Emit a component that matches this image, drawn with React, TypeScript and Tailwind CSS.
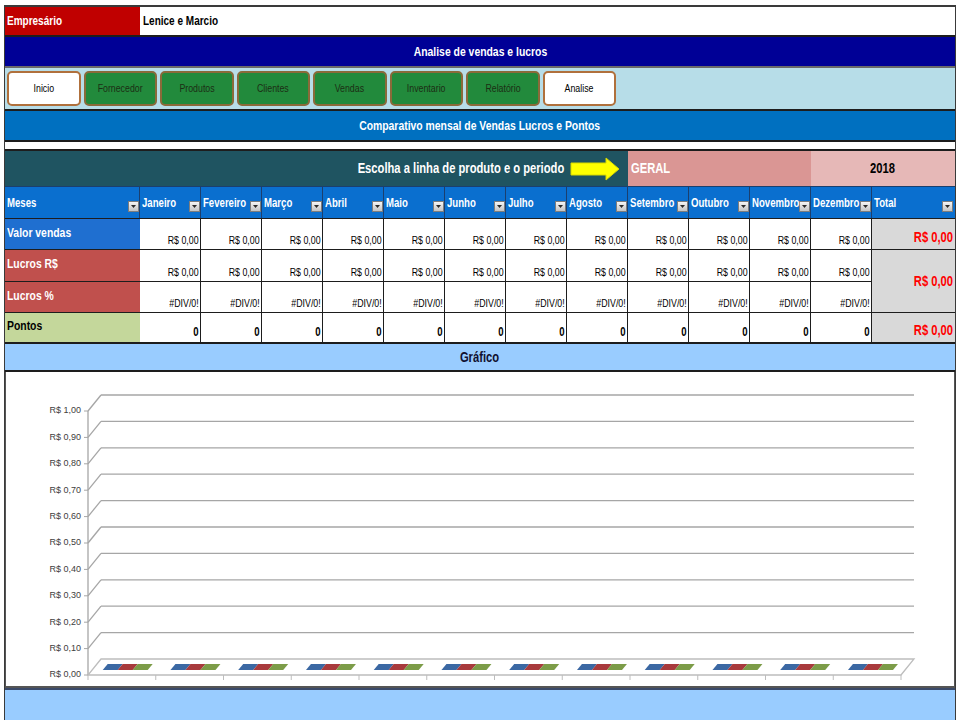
import React from 'react';

const months = ['Janeiro', 'Fevereiro', 'Março', 'Abril', 'Maio', 'Junho', 'Julho', 'Agosto', 'Setembro', 'Outubro', 'Novembro', 'Dezembro'];

const buttons = [
  { label: 'Inicio', active: true },
  { label: 'Fornecedor', active: false },
  { label: 'Produtos', active: false },
  { label: 'Clientes', active: false },
  { label: 'Vendas', active: false },
  { label: 'Inventario', active: false },
  { label: 'Relatório', active: false },
  { label: 'Analise', active: true },
];

const axisLabels = ['R$ 1,00', 'R$ 0,90', 'R$ 0,80', 'R$ 0,70', 'R$ 0,60', 'R$ 0,50', 'R$ 0,40', 'R$ 0,30', 'R$ 0,20', 'R$ 0,10', 'R$ 0,00'];

// no narrow font installed, so squeeze Arial metrics horizontally
const N = ({ children, origin = 'left' }: { children: React.ReactNode; origin?: 'left' | 'right' | 'center' }) => (
  <span
    className={`inline-block whitespace-nowrap scale-x-[0.8] ${
      origin === 'left' ? 'origin-left' : origin === 'right' ? 'origin-right' : 'origin-center'
    }`}
  >
    {children}
  </span>
);

const Drop = () => (
  <span className="flex h-[11px] w-[11px] shrink-0 items-center justify-center border border-[#7d7d7d] bg-linear-to-b from-[#f6f6f6] to-[#c4c4c4]">
    <svg width="5" height="3" viewBox="0 0 5 3">
      <path d="M0 0h5L2.5 3z" fill="#2a2a2a" />
    </svg>
  </span>
);

const Chart = () => {
  const barColors = ['#3b68a3', '#a83a3c', '#7c9c48'];
  return (
    <svg width="947" height="315" viewBox="0 0 947 315">
      {axisLabels.map((label, k) => {
        const y = 23 + k * 26.4;
        return (
          <g key={label}>
            {k < 10 && <line x1="94" y1={y} x2="907" y2={y} stroke="#a6a6a6" strokeWidth="1.3" />}
            {k < 10 && <line x1="81" y1={y + 16} x2="94" y2={y} stroke="#a6a6a6" strokeWidth="1.3" />}
            <line x1="77" y1={y + 16} x2="81" y2={y + 16} stroke="#a6a6a6" />
            <text x="74" y={y + 16} textAnchor="end" dominantBaseline="middle" fontSize="9" fill="#404040">
              {label}
            </text>
          </g>
        );
      })}
      <line x1="81" y1="39" x2="81" y2="303" stroke="#a6a6a6" strokeWidth="1.3" />
      <polygon points="94,287 907,287 894,303 81,303" fill="none" stroke="#bdbdbd" strokeWidth="1.3" />
      {Array.from({ length: 13 }).map((_, i) => (
        <line key={i} x1={81 + i * 67.75} y1="303" x2={81 + i * 67.75} y2="308" stroke="#bdbdbd" />
      ))}
      {Array.from({ length: 12 }).map((_, i) => {
        const x0 = 95.7 + i * 67.75;
        return (
          <g key={i}>
            {barColors.map((c, j) => {
              const bl = x0 + j * 15;
              return <polygon key={c} points={`${bl},298 ${bl + 15},298 ${bl + 20},292 ${bl + 5},292`} fill={c} />;
            })}
          </g>
        );
      })}
    </svg>
  );
};

export default function App() {
  return (
    <div className="h-[720px] w-[960px] overflow-hidden bg-white pl-[4px] pt-[5px] font-['Liberation_Sans',Arial,sans-serif]">
      <div className="w-[952px] border-x border-t-2 border-[#3a3a3a]">
        {/* empresario */}
        <div className="flex h-[30px] border-b-2 border-[#1d1d1d]">
          <div className="flex w-[135px] items-center bg-[#c00000] pl-[2px] text-[12.5px] font-bold text-white">
            <N>Empresário</N>
          </div>
          <div className="flex flex-1 items-center pl-[3px] text-[12.5px] font-bold text-black">
            <N>Lenice e Marcio</N>
          </div>
        </div>
        <div className="flex h-[31px] items-center justify-center border-b-2 border-[#6a6a6a] bg-[#000096] text-[13px] font-bold text-white">
          <N origin="center">Analise de vendas e lucros</N>
        </div>
        {/* menu */}
        <div className="flex h-[43px] items-center gap-[3px] border-b-2 border-[#1d1d1d] bg-[#b7dde8] pl-[2px]">
          {buttons.map((b) => (
            <div
              key={b.label}
              className={`flex h-[35px] w-[73.5px] items-center justify-center rounded-[5px] border-2 text-[11px] ${
                b.active ? 'border-[#b0703c] bg-white text-black' : 'border-[#8a6a3a] bg-[#228a3c] text-[#1c2e14]'
              }`}
            >
              <N origin="center">{b.label}</N>
            </div>
          ))}
        </div>
        <div className="flex h-[31px] items-center justify-center border-b-2 border-[#1d1d1d] bg-[#0070c0] text-[13px] font-bold text-white">
          <N origin="center">Comparativo mensal de Vendas Lucros e Pontos</N>
        </div>
        <div className="h-[9px] border-b-2 border-[#1d1d1d] bg-white" />

        {/* tabela */}
        <div className="grid grid-cols-[135px_repeat(12,61px)_83px]">
          <div className="col-span-9 flex h-[35px] items-center justify-end gap-[6px] bg-[#1f5461] pr-[8px]">
            <span className="text-[14px] font-bold text-white">
              <N origin="right">Escolha a linha de produto e o periodo</N>
            </span>
            <svg width="50" height="24" viewBox="0 0 50 24">
              <path d="M1 6h35V1l13 11-13 11v-5H1z" fill="#ffff00" stroke="#d8d800" />
            </svg>
          </div>
          <div className="col-span-3 flex h-[35px] items-center bg-[#da9694] pl-[3px] text-[14px] font-bold text-white">
            <N>GERAL</N>
          </div>
          <div className="col-span-2 flex h-[35px] items-center justify-center bg-[#e6b8b7] text-[14px] font-bold text-black">
            <N origin="center">2018</N>
          </div>

          {/* header */}
          {['Meses', ...months, 'Total'].map((m, i) => (
            <div
              key={m}
              className={`flex h-[32px] items-center justify-between border-t border-[#1b3f6e] bg-[#0a6fcf] pl-[2px] ${
                i === 13 ? 'pr-[2px]' : 'border-r'
              }`}
            >
              <span className="min-w-0 flex-1 text-[12px] font-bold text-white">
                <N>{m}</N>
              </span>
              <span className="mt-[8px]">
                <Drop />
              </span>
            </div>
          ))}

          {/* valor vendas */}
          <div className="flex h-[32px] items-center border-t border-b border-[#1d1d1d] bg-[#1f6fd0] pb-[3px] pl-[2px] text-[13px] font-bold text-white">
            <N>Valor vendas</N>
          </div>
          {months.map((m) => (
            <div key={m} className="flex h-[32px] items-end justify-end border-r border-t border-b border-[#1d1d1d] pb-[1px] pr-[1px] text-[11px] text-black">
              <N origin="right">R$ 0,00</N>
            </div>
          ))}
          <div className="flex h-[32px] items-end justify-end border-t border-b border-[#1d1d1d] bg-[#d9d9d9] pb-[1px] pr-[2px] text-[14px] font-bold text-[#ff0000]">
            <N origin="right">R$ 0,00</N>
          </div>

          {/* lucros R$ */}
          <div className="flex h-[32px] items-center border-b border-[#1d1d1d] bg-[#c0504d] pb-[3px] pl-[2px] text-[13px] font-bold text-white">
            <N>Lucros R$</N>
          </div>
          {months.map((m) => (
            <div key={m} className="flex h-[32px] items-end justify-end border-r border-b border-[#1d1d1d] pb-[1px] pr-[1px] text-[11px] text-black">
              <N origin="right">R$ 0,00</N>
            </div>
          ))}
          <div className="row-span-2 flex items-center justify-end border-b border-[#1d1d1d] bg-[#d9d9d9] pr-[2px] text-[14px] font-bold text-[#ff0000]">
            <N origin="right">R$ 0,00</N>
          </div>

          {/* lucros % */}
          <div className="flex h-[31px] items-center border-b border-[#1d1d1d] bg-[#c0504d] pb-[3px] pl-[2px] text-[13px] font-bold text-white">
            <N>Lucros %</N>
          </div>
          {months.map((m) => (
            <div key={m} className="flex h-[31px] items-end justify-end border-r border-b border-[#1d1d1d] pb-[1px] pr-[1px] text-[11px] text-black">
              <N origin="right">#DIV/0!</N>
            </div>
          ))}

          {/* pontos */}
          <div className="flex h-[31px] items-center border-b-2 border-[#1d1d1d] bg-[#c4d79b] pb-[3px] pl-[2px] text-[13px] font-bold text-black">
            <N>Pontos</N>
          </div>
          {months.map((m) => (
            <div key={m} className="flex h-[31px] items-end justify-end border-r border-b-2 border-[#1d1d1d] pb-[1px] pr-[1px] text-[12px] font-bold text-black">
              <N origin="right">0</N>
            </div>
          ))}
          <div className="flex h-[31px] items-end justify-end border-b-2 border-[#1d1d1d] bg-[#d9d9d9] pb-[1px] pr-[2px] text-[14px] font-bold text-[#ff0000]">
            <N origin="right">R$ 0,00</N>
          </div>
        </div>

        {/* grafico */}
        <div className="flex h-[28px] items-center justify-center border-b-2 border-[#1d1d1d] bg-[#99ccff] text-[14px] font-bold text-[#101030]">
          <N origin="center">Gráfico</N>
        </div>
        <div className="h-[316px] border-x border-b-2 border-[#555] bg-white pl-[1px]">
          <Chart />
        </div>
        <div className="h-[40px] border-t-2 border-[#3a4a6a] bg-[#99ccff]" />
      </div>
    </div>
  );
}
